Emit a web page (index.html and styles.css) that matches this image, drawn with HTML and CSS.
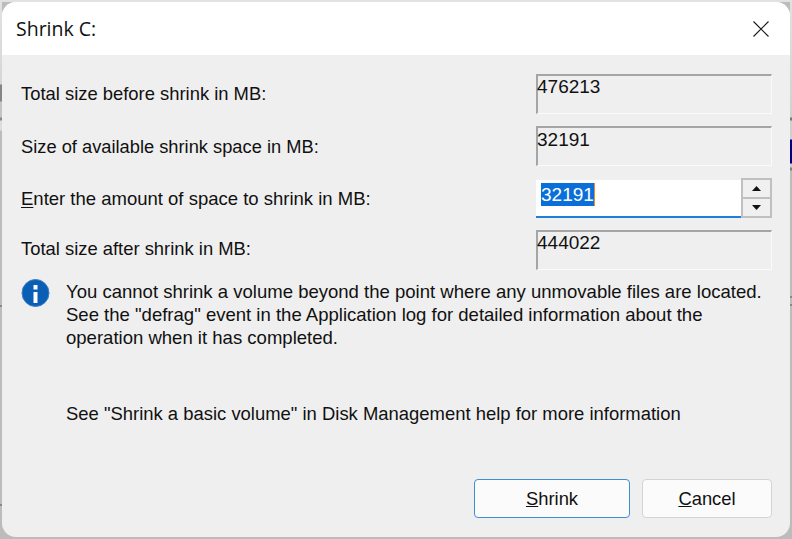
FILE: index.html
```html
<!DOCTYPE html>
<html lang="en">
<head>
<meta charset="utf-8">
<title>Shrink C:</title>
<link rel="stylesheet" href="styles.css">
</head>
<body>
<div class="dialog">
  <header class="titlebar">
    <span class="title">Shrink C:</span>
    <svg class="close" width="16" height="16" viewBox="0 0 16 16"><path d="M0.5 0.5L15.5 15.5M15.5 0.5L0.5 15.5" stroke="#1a1a1a" stroke-width="1.1" fill="none"/></svg>
  </header>
  <main class="content">
    <div class="form">
      <div class="label">Total size before shrink in MB:</div>
      <div class="field">476213</div>
      <div class="label lower">Size of available shrink space in MB:</div>
      <div class="field lower-value">32191</div>
      <div class="label wide"><u>E</u>nter the amount of space to shrink in MB:</div>
      <div class="spin">
        <div class="input"><span class="sel">32191</span><span class="caret"></span></div>
        <div class="arrows">
          <div class="arrow"><svg width="9" height="5" viewBox="0 0 9 5"><path d="M4.5 0L9 5H0Z" fill="#111"/></svg></div>
          <div class="arrow"><svg width="9" height="5" viewBox="0 0 9 5"><path d="M0 0H9L4.5 5Z" fill="#111"/></svg></div>
        </div>
      </div>
      <div class="label upper">Total size after shrink in MB:</div>
      <div class="field">444022</div>
    </div>
    <div class="info">
      <svg class="info-icon" width="29" height="29" viewBox="0 0 29 29">
        <circle cx="14.5" cy="14" r="13.5" fill="#0a5fb4" stroke="#3d7fc4" stroke-width="1"/>
        <rect x="12.5" y="6" width="4" height="4.5" fill="#fff"/>
        <rect x="12.5" y="13" width="4" height="11" fill="#fff"/>
      </svg>
      <p class="info-text">You cannot shrink a volume beyond the point where any unmovable files are located.<br>See the "defrag" event in the Application log for detailed information about the<br>operation when it has completed.</p>
    </div>
    <p class="help">See "Shrink a basic volume" in Disk Management help for more information</p>
    <div class="buttons">
      <button class="btn primary"><u>S</u>hrink</button>
      <button class="btn"><u>C</u>ancel</button>
    </div>
  </main>
</div>
</body>
</html>
```
FILE: styles.css
```css
html, body {
  margin: 0;
  height: 100%;
}
body {
  width: 792px;
  height: 539px;
  overflow: hidden;
  padding: 2px;
  box-sizing: border-box;
  font-family: "Liberation Sans", Arial, sans-serif;
  font-size: 18.4px;
  color: #111;
  background-color: #bcbcbc;
  background-repeat: no-repeat;
  background-size: 2px 100%, 2px 100%, 100% 2px;
  background-position: left top, right top, left top;
  background-image:
    linear-gradient(#e2e2e2 0, #d6d6d6 84px, #858585 85px, #858585 101px, #c4c4c4 102px, #c4c4c4 117px, #8a8a8a 118px, #8a8a8a 120px, #dcdcdc 121px, #dcdcdc 130px, #bcbcbc 131px, #bcbcbc 305px, #888 305px, #888 307px, #bcbcbc 307px, #bcbcbc 504px, #888 504px, #888 506px, #bcbcbc 506px),
    linear-gradient(#e2e2e2 0, #d0d0d0 117px, #777 118px, #777 120px, #cfcfcf 121px, #cfcfcf 139px, #000080 140px, #000080 163px, #cfcfcf 164px, #cfcfcf 167px, #808080 168px, #808080 170px, #bcbcbc 171px, #bcbcbc 296px, #888 296px, #888 298px, #bcbcbc 298px, #bcbcbc 304px, #888 304px, #888 306px, #bcbcbc 306px),
    linear-gradient(#e2e2e2, #e2e2e2);
}
.dialog {
  height: 535px;
  border-radius: 14px;
  background: #efefef;
  overflow: hidden;
  display: flex;
  flex-direction: column;
}
.titlebar {
  height: 53px;
  flex: none;
  background: #fff;
  display: flex;
  align-items: center;
  justify-content: space-between;
  padding: 0 21px 0 14px;
}
.title {
  font-family: "Open Sans", sans-serif;
  font-size: 19.5px;
  color: #111;
}
.content {
  flex: 1;
  display: flex;
  flex-direction: column;
  padding: 19px 18px 19px 19px;
}
.form {
  display: grid;
  grid-template-columns: 515px 236px;
  grid-auto-rows: 40px;
  row-gap: 12px;
}
.label {
  display: flex;
  align-items: flex-end;
  padding-bottom: 9px;
  white-space: pre;
}
.label.lower { padding-bottom: 8px; font-size: 18.3px; }
.label.upper { padding-bottom: 10px; }
.label.wide { font-size: 18.5px; display: block; padding: 10px 0 0; line-height: 21px; }
.label u { text-underline-offset: 2px; }
.field {
  box-sizing: border-box;
  border-style: solid;
  border-width: 2px 1px 1px 2px;
  border-color: #a5a5a5 #fafafa #fafafa #a5a5a5;
  padding: 1px 0 0 0;
  line-height: 20px;
  font-size: 19px;
  text-indent: -1px;
}
.field.lower-value { padding-top: 2px; }
.spin {
  display: flex;
  box-sizing: border-box;
  height: 40px;
}
.input {
  flex: 1;
  background: #fff;
  border-top: 2px solid #f0f0f0;
  border-bottom: 2px solid #1f7fd4;
  padding: 3px 0 0 5px;
  display: flex;
  align-items: flex-start;
  line-height: 23px;
  font-size: 19px;
  box-sizing: border-box;
}
.sel {
  background: #0a6fd8;
  color: #fff;
}
.caret {
  width: 1px;
  height: 23px;
  background: #f08a30;
}
.arrows {
  width: 31px;
  box-sizing: border-box;
  background: #c0c0c0;
  border: 1px solid #c0c0c0;
  padding: 1px;
  display: flex;
  flex-direction: column;
  gap: 2px;
}
.arrow {
  flex: 1;
  background: #f0f0f0;
  display: flex;
  align-items: center;
  justify-content: center;
}
.info {
  display: flex;
  gap: 16px;
  margin-top: 9px;
}
.info-icon {
  flex: none;
}
.info-text {
  margin: 0;
  padding-top: 1px;
  white-space: nowrap;
  line-height: 23px;
  font-size: 18.55px;
}
.help {
  margin: 53px 0 0 45px;
  line-height: 23px;
  font-size: 18.45px;
}
.buttons {
  margin-top: auto;
  display: flex;
  justify-content: flex-end;
  gap: 12px;
}
.btn {
  width: 130px;
  height: 39px;
  box-sizing: border-box;
  background: #fbfbfb;
  border: 1px solid #d4d4d4;
  border-radius: 4px;
  font: inherit;
  color: #111;
  padding: 0;
}
.btn.primary {
  width: 156px;
  border-color: #3f8ed8;
}
```
